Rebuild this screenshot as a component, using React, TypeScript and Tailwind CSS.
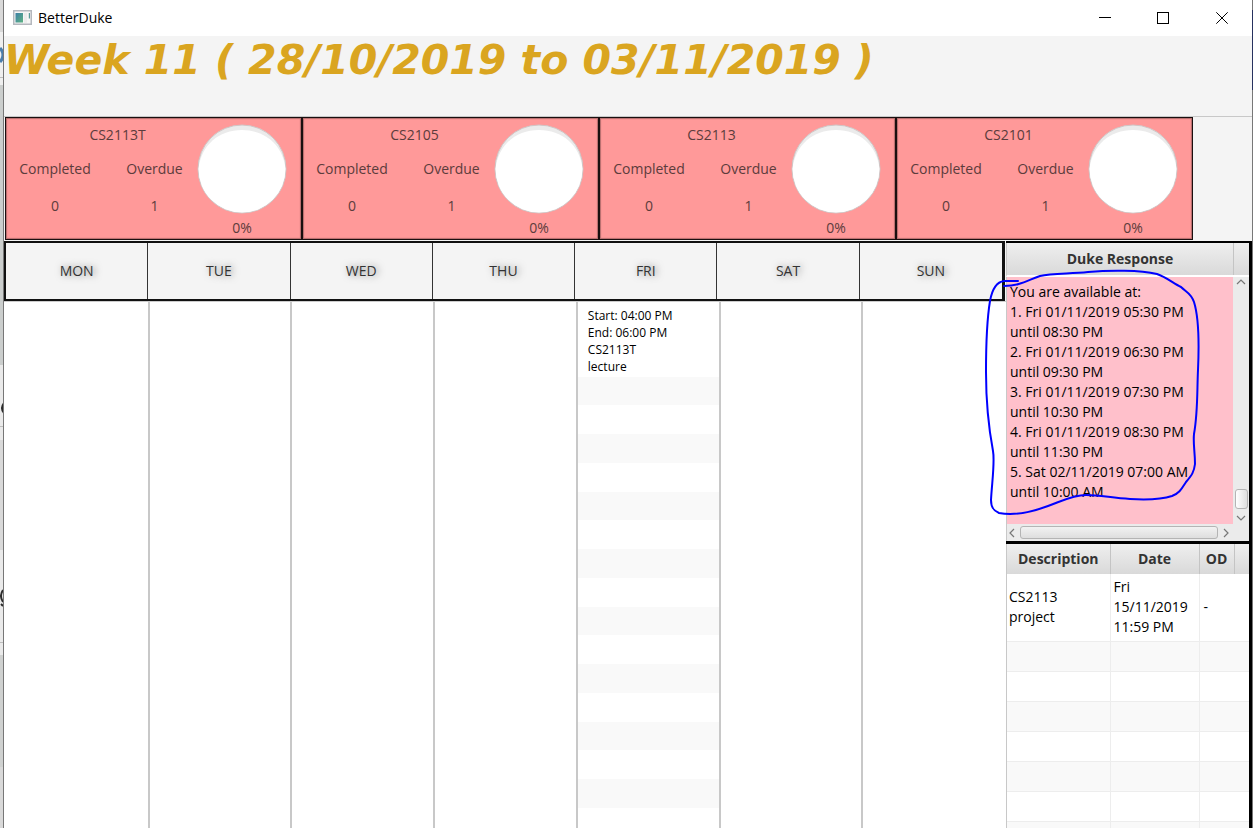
import React from "react";

const modules = ["CS2113T", "CS2105", "CS2113", "CS2101"];
const days = ["MON", "TUE", "WED", "THU", "FRI", "SAT", "SUN"];
const slots = [
  "1. Fri 01/11/2019 05:30 PM until 08:30 PM",
  "2. Fri 01/11/2019 06:30 PM until 09:30 PM",
  "3. Fri 01/11/2019 07:30 PM until 10:30 PM",
  "4. Fri 01/11/2019 08:30 PM until 11:30 PM",
  "5. Sat 02/11/2019 07:00 AM until 10:00 AM",
];
const stripes = Array.from({ length: 20 }, (_, i) => i);
const emptyRows = Array.from({ length: 8 }, (_, i) => i);

function DesktopEdge() {
  return (
    <svg className="h-full w-[3px] shrink-0 bg-[#d9d9d9]" aria-hidden="true">
      <rect y="32" width="3" height="53" fill="#efefef" />
      <rect y="85" width="3" height="280" fill="#cbcecd" />
      <rect y="365" width="3" height="75" fill="#eaeaea" />
      <rect y="550" width="3" height="105" fill="#eaeaea" />
      <rect y="655" width="3" height="112" fill="#cfd1d0" />
      <path d="M0 77.5H3M0 426.5H3M0 642.5H3" stroke="#bdbdbd" />
      <path d="M0 48Q6 55 0 62" fill="none" stroke="#4a7dac" strokeWidth="3" />
      <path d="M4 403Q0 408 4 413" fill="none" stroke="#2a2a2a" strokeWidth="2" />
      <path d="M3 590Q-1 596 3 602M1 604L3 606" fill="none" stroke="#2a2a2a" strokeWidth="2" />
    </svg>
  );
}

function TitleBar() {
  return (
    <header className="flex h-9 shrink-0 items-center bg-white text-black">
      <svg className="ml-[9px] h-4 w-5" viewBox="0 0 20 16" aria-hidden="true">
        <defs>
          <linearGradient id="appIcon" x1="0" y1="0" x2="1" y2="1">
            <stop offset="0" stopColor="#3c7fa6" />
            <stop offset="1" stopColor="#5fb383" />
          </linearGradient>
        </defs>
        <rect x="0.75" y="0.75" width="17.5" height="13.5" fill="#f6f6f6" stroke="#b4b8be" strokeWidth="1.5" />
        <rect x="2.5" y="3" width="7.5" height="9.5" fill="url(#appIcon)" />
        <rect x="11" y="3" width="3" height="10" fill="#ececec" />
        <rect x="15.8" y="3" width="1.2" height="5.5" fill="#5a9b97" />
      </svg>
      <span className="ml-[5px] flex-1 text-sm">BetterDuke</span>
      <button type="button" aria-label="Minimize" className="flex h-9 w-[58px] items-center justify-center">
        <svg className="h-3 w-3" viewBox="0 0 12 12" aria-hidden="true">
          <path d="M0 5.5H12" stroke="#000" />
        </svg>
      </button>
      <button type="button" aria-label="Maximize" className="flex h-9 w-[58px] items-center justify-center">
        <svg className="h-3 w-3" viewBox="0 0 12 12" aria-hidden="true">
          <rect x="0.5" y="0.5" width="11" height="11" fill="none" stroke="#000" />
        </svg>
      </button>
      <button type="button" aria-label="Close" className="flex h-9 w-[60px] items-center justify-center">
        <svg className="h-3 w-3" viewBox="0 0 12 12" aria-hidden="true">
          <path d="M0.3 0.3L11.7 11.7M11.7 0.3L0.3 11.7" stroke="#000" />
        </svg>
      </button>
    </header>
  );
}

function ModuleCard({ name }: { name: string }) {
  return (
    <article className="flex h-[123px] border border-[#1a0f0f] bg-[#ff9999] text-sm text-[#5c3c3c] shadow-[inset_0_0_1px_1px_#b46c6c]">
      <div className="flex-1 pt-[7px] text-center">
        <h2 className="pl-8 leading-5">{name}</h2>
        <dl className="mt-[14px] grid grid-cols-[98px_1fr]">
          <div className="flex flex-col gap-[17px]">
            <dt className="leading-5">Completed</dt>
            <dd className="leading-5">0</dd>
          </div>
          <div className="flex flex-col gap-[17px] pl-2">
            <dt className="leading-5">Overdue</dt>
            <dd className="leading-5">1</dd>
          </div>
        </dl>
      </div>
      <div className="flex w-[104px] flex-col items-center pr-[14px] pt-[6px]">
        <svg className="h-[90px] w-[90px]" viewBox="0 0 90 90" aria-hidden="true">
          <circle cx="45" cy="45" r="44" fill="#ebebeb" stroke="#cfc6c6" />
          <path d="M1.5 45C4 21 22 6 45 6S86 21 88.5 45A43.5 43.5 0 0 1 1.5 45Z" fill="#fff" />
        </svg>
        <span className="mt-1 leading-5">0%</span>
      </div>
    </article>
  );
}

function WeekTable() {
  return (
    <section className="flex min-w-0 flex-1 flex-col">
      <div className="mr-[1px] grid h-[60px] shrink-0 grid-cols-7 border-2 border-r-[3px] border-[#111] bg-[#f4f4f4]">
        {days.map((d) => (
          <h3
            key={d}
            className="flex items-center justify-center border-r border-[#333] text-sm text-[#333] last:border-r-0 [text-shadow:2px_0_7px_#777]"
          >
            {d}
          </h3>
        ))}
      </div>
      <div className="grid min-h-0 flex-1 grid-cols-7 overflow-hidden border-t border-[#ccc] bg-white pl-[3px]">
        {days.map((d) => (
          <div key={d} className="border-r-2 border-[#c8c8c8] last:border-r-0">
            {d === "FRI" && (
              <div>
                <p className="h-[75px] pl-[10px] pt-[5px] text-xs leading-[17px] text-black">
                  Start: 04:00 PM
                  <br />
                  End: 06:00 PM
                  <br />
                  CS2113T
                  <br />
                  lecture
                </p>
                {stripes.map((i) => (
                  <div key={i} className="h-[28px] odd:h-[29px] even:bg-[#f9f9f9] nth-[4n]:h-[29px]" />
                ))}
              </div>
            )}
          </div>
        ))}
      </div>
    </section>
  );
}

function Chevron({ d }: { d: string }) {
  return (
    <svg className="h-[10px] w-[10px] shrink-0" viewBox="0 0 10 10" aria-hidden="true">
      <path d={d} fill="none" stroke="#777" strokeWidth="1.2" />
    </svg>
  );
}

function ResponsePanel() {
  return (
    <section className="relative flex h-[301px] shrink-0 flex-col border-b-[3px] border-black">
      <div className="flex h-[34px] shrink-0 border-b-2 border-l border-b-white border-l-[#c8c8c8] bg-linear-to-b from-[#efefef] to-[#d9d9d9]">
        <h3 className="flex flex-1 items-center justify-center text-sm font-bold text-[#333]">Duke Response</h3>
        <div className="w-4 border-l border-[#c4c4c4]" />
      </div>
      <div className="flex min-h-0 flex-1">
        <div className="flex-1 border-l border-[#c8c8c8] bg-[#ffc0cb] pl-[3px] pr-[36px] pt-[5px] text-sm leading-5 text-black">
          <p>You are available at:</p>
          {slots.map((s) => (
            <p key={s}>{s}</p>
          ))}
        </div>
        <div className="flex w-4 flex-col items-center bg-[#ebebeb] pb-[1px]">
          <Chevron d="M1 7L5 3L9 7" />
          <div className="mb-1 mt-auto h-5 w-[13px] rounded-[3px] border border-[#b4b4b4] bg-linear-to-r from-white to-[#dedede]" />
          <Chevron d="M1 3L5 7L9 3" />
        </div>
      </div>
      <div className="flex h-[17px] shrink-0 items-center border-l border-[#c8c8c8] bg-[#ebebeb] pr-[18px]">
        <Chevron d="M7 1L3 5L7 9" />
        <div className="mx-[3px] h-[13px] flex-1 rounded-[3px] border border-[#b4b4b4] bg-linear-to-b from-[#f2f2f2] to-[#dedede]" />
        <Chevron d="M3 1L7 5L3 9" />
      </div>
      <svg
        className="pointer-events-none absolute -left-[26px] top-[22px] h-[256px] w-[226px]"
        viewBox="980 265 226 256"
        aria-hidden="true"
      >
        <path
          d="M1018 281L1004 281C996 282 992 290 990 301C986 325 986 352 986 372C986 405 990 435 993 451C995 462 992 482 991 500C991 508 994 511 999 513C1014 516 1032 512 1048 506C1062 501 1073 495 1086 495C1100 495 1112 498 1130 499C1148 500 1163 499 1172 496C1180 493 1182 488 1186 482C1192 475 1194 472 1195 464C1195 452 1193 444 1194 434C1198 412 1197 390 1198 370C1199 348 1199 318 1194 302C1191 293 1186 292 1181 287C1173 283 1166 277 1157 274C1140 270 1110 270 1088 272C1070 274 1052 273 1040 276C1028 280 1020 286 1004 286"
          fill="none"
          stroke="#0000ff"
          strokeWidth="2"
          strokeLinecap="round"
          strokeLinejoin="round"
        />
      </svg>
    </section>
  );
}

function TaskTable() {
  return (
    <div className="min-h-0 flex-1 overflow-hidden border-l border-[#c8c8c8] bg-white">
      <table className="w-full table-fixed border-collapse text-sm leading-5 text-black">
        <colgroup>
          <col className="w-[103px]" />
          <col className="w-[89px]" />
          <col className="w-[35px]" />
          <col />
        </colgroup>
        <thead>
          <tr className="h-[30px] bg-linear-to-b from-[#efefef] to-[#d9d9d9] text-[#333]">
            <th className="border-r border-[#c4c4c4] p-0">Description</th>
            <th className="border-r border-[#c4c4c4] p-0">Date</th>
            <th className="border-r border-[#c4c4c4] p-0">OD</th>
            <td />
          </tr>
        </thead>
        <tbody>
          <tr className="h-[67px] border-b border-[#ededed]">
            <td className="border-r border-[#ededed] px-[2px] py-0">
              CS2113
              <br />
              project
            </td>
            <td className="border-r border-[#ededed] px-[3px] py-0">Fri 15/11/2019 11:59 PM</td>
            <td className="px-[4px] py-0">-</td>
            <td />
          </tr>
          {emptyRows.map((i) => (
            <tr key={i} className="h-[30px] border-b border-[#ededed] odd:bg-white even:bg-[#f9f9f9]">
              <td className="border-r border-[#ededed]" />
              <td className="border-r border-[#ededed]" />
              <td />
              <td />
            </tr>
          ))}
        </tbody>
      </table>
    </div>
  );
}

export default function App() {
  return (
    <div className="flex h-screen overflow-hidden bg-[#777] font-['Open_Sans','Noto_Sans',sans-serif]">
      <DesktopEdge />
      <main className="flex min-w-0 flex-1 flex-col border-l border-[#777] bg-[#f4f4f4]">
        <TitleBar />
        <div className="h-20 shrink-0">
          <h1 className="whitespace-nowrap font-['DejaVu_Sans',sans-serif] text-[41px] font-bold italic leading-[48px] text-[#daa520]">
            Week 11 ( 28/10/2019 to 03/11/2019 )
          </h1>
        </div>
        <div className="grid shrink-0 grid-cols-4 border-t border-[#c8c8c8] pb-[1px] pl-[1px] pr-[59px]">
          {modules.map((m) => (
            <ModuleCard key={m} name={m} />
          ))}
        </div>
        <div className="flex min-h-0 flex-1">
          <WeekTable />
          <aside className="flex w-[246px] shrink-0 flex-col border-r-[3px] border-t-2 border-black bg-white">
            <ResponsePanel />
            <TaskTable />
          </aside>
        </div>
      </main>
      <div className="w-px shrink-0 pt-[10px]">
        <div className="h-20 bg-[#26315e]" />
      </div>
    </div>
  );
}
